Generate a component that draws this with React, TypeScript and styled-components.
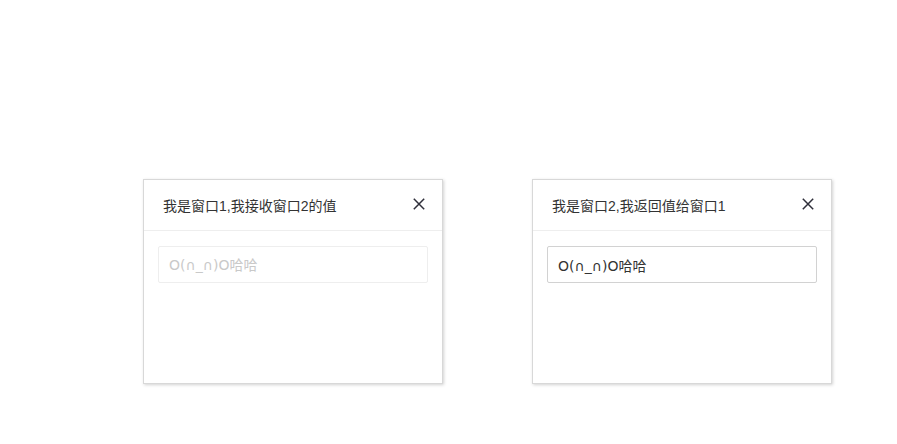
import { useEffect, useRef } from "react";
import styled, { createGlobalStyle } from "styled-components";

const GlobalStyle = createGlobalStyle`
  html, body {
    margin: 0;
    padding: 0;
    background: #fff;
    font-family: "Liberation Sans", "Noto Sans CJK SC", sans-serif;
    color: #333;
  }
`;

const Stage = styled.div`
  display: flex;
  gap: 89px;
  padding: 179px 0 0 143px;
  height: 444px;
  box-sizing: border-box;
`;

const Layer = styled.div`
  width: 300px;
  height: 205px;
  box-sizing: border-box;
  border: 1px solid #d8d8d8;
  box-shadow: 1px 1px 3px rgba(0, 0, 0, 0.18);
  background: #fff;
  display: flex;
  flex-direction: column;
`;

const Header = styled.div`
  height: 50px;
  flex: none;
  display: flex;
  align-items: center;
  justify-content: space-between;
  padding: 0 17px 0 19px;
  border-bottom: 1px solid #eee;
  font-size: 14px;
  color: #333;
`;

const CloseButton = styled.button`
  border: 0;
  background: none;
  padding: 0;
  width: 12px;
  height: 12px;
  display: flex;
  cursor: pointer;
  margin-top: -2px;
`;

const Body = styled.div`
  padding: 15px 14px;
`;

const Input = styled.input<{ $muted?: boolean }>`
  width: 100%;
  height: 37px;
  box-sizing: border-box;
  padding: 0 10px;
  border: 1px solid ${(p) => (p.$muted ? "#eee" : "#d2d2d2")};
  border-radius: 2px;
  font-family: "DejaVu Sans", "Noto Sans CJK SC", sans-serif;
  font-size: 14px;
  color: #333;
  caret-color: #000;
  outline: none;
  background: #fff;

  &::placeholder {
    color: #c9c9c9;
  }
`;

function CloseIcon() {
  return (
    <svg width="12" height="12" viewBox="0 0 12 12">
      <path d="M0.8 0.8 L11.2 11.2 M11.2 0.8 L0.8 11.2" stroke="#2f2f3a" strokeWidth="1.5" />
    </svg>
  );
}

export default function App() {
  const ref = useRef<HTMLInputElement>(null);
  const text = "O(∩_∩)O哈哈";

  useEffect(() => {
    const el = ref.current;
    if (el) {
      el.focus();
      el.setSelectionRange(text.length, text.length);
    }
  }, []);

  return (
    <>
      <GlobalStyle />
      <Stage>
        <Layer>
          <Header>
            <span>我是窗口1,我接收窗口2的值</span>
            <CloseButton aria-label="关闭">
              <CloseIcon />
            </CloseButton>
          </Header>
          <Body>
            <Input $muted readOnly placeholder={text} />
          </Body>
        </Layer>
        <Layer>
          <Header>
            <span>我是窗口2,我返回值给窗口1</span>
            <CloseButton aria-label="关闭">
              <CloseIcon />
            </CloseButton>
          </Header>
          <Body>
            <Input ref={ref} defaultValue={text} />
          </Body>
        </Layer>
      </Stage>
    </>
  );
}
